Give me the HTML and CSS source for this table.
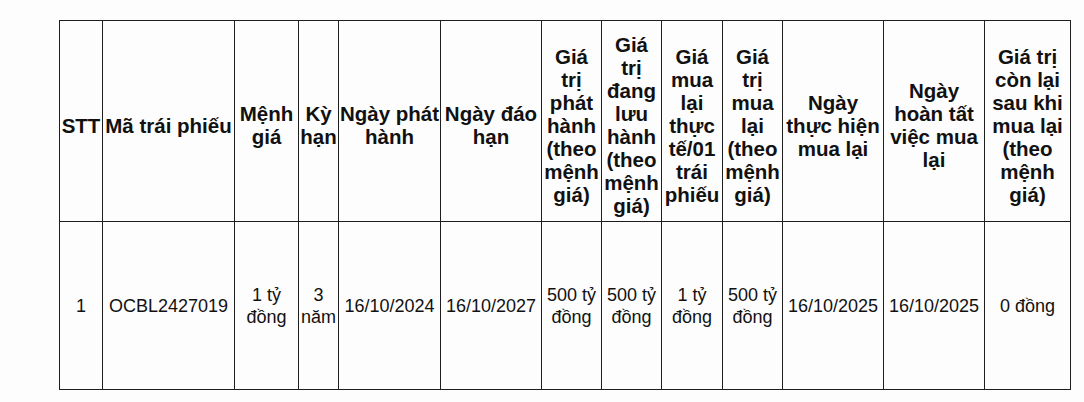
FILE: index.html
```html
<!DOCTYPE html>
<html lang="vi">
<head>
<meta charset="utf-8">
<title>Mua lại trái phiếu</title>
<link rel="stylesheet" href="styles.css">
</head>
<body>
<table class="bond-table">
  <colgroup>
    <col class="c-stt">
    <col class="c-code">
    <col class="c-par">
    <col class="c-term">
    <col class="c-date">
    <col class="c-date2">
    <col class="c-narrow">
    <col class="c-narrow">
    <col class="c-narrow2">
    <col class="c-narrow">
    <col class="c-date2">
    <col class="c-date2">
    <col class="c-last">
  </colgroup>
  <thead>
    <tr class="head-row">
      <th>STT</th>
      <th>Mã trái phiếu</th>
      <th>Mệnh<br>giá</th>
      <th>Kỳ<br>hạn</th>
      <th>Ngày phát<br>hành</th>
      <th>Ngày đáo<br>hạn</th>
      <th>Giá<br>trị<br>phát<br>hành<br>(theo<br>mệnh<br>giá)</th>
      <th>Giá<br>trị<br>đang<br>lưu<br>hành<br>(theo<br>mệnh<br>giá)</th>
      <th>Giá<br>mua<br>lại<br>thực<br>tế/01<br>trái<br>phiếu</th>
      <th>Giá<br>trị<br>mua<br>lại<br>(theo<br>mệnh<br>giá)</th>
      <th>Ngày<br>thực hiện<br>mua lại</th>
      <th>Ngày<br>hoàn tất<br>việc mua<br>lại</th>
      <th>Giá trị<br>còn lại<br>sau khi<br>mua lại<br>(theo<br>mệnh<br>giá)</th>
    </tr>
  </thead>
  <tbody>
    <tr class="body-row">
      <td>1</td>
      <td>OCBL2427019</td>
      <td>1 tỷ<br>đồng</td>
      <td>3<br>năm</td>
      <td>16/10/2024</td>
      <td>16/10/2027</td>
      <td>500 tỷ<br>đồng</td>
      <td>500 tỷ<br>đồng</td>
      <td>1 tỷ<br>đồng</td>
      <td>500 tỷ<br>đồng</td>
      <td>16/10/2025</td>
      <td>16/10/2025</td>
      <td>0 đồng</td>
    </tr>
  </tbody>
</table>
</body>
</html>
```
FILE: styles.css
```css
html, body {
  margin: 0;
  padding: 0;
  background: #fdfdfd;
}

body {
  padding: 20px 0 0 59px;
  font-family: "Liberation Sans", Arial, sans-serif;
  color: #111;
}

.bond-table {
  table-layout: fixed;
  width: 1011px;
  border-collapse: collapse;
  border: 1.5px solid #1e1e1e;
}

.c-stt { width: 43px; }
.c-code { width: 132px; }
.c-par { width: 64px; }
.c-term { width: 40px; }
.c-date { width: 102px; }
.c-date2 { width: 101px; }
.c-narrow { width: 60px; }
.c-narrow2 { width: 61px; }
.c-last { width: 86px; }

.bond-table th,
.bond-table td {
  border: 1px solid #1e1e1e;
  padding: 0 1px;
  text-align: center;
  vertical-align: middle;
  white-space: nowrap;
  overflow: visible;
}

.bond-table th {
  font-weight: bold;
  font-size: 20.5px;
  line-height: 23px;
  padding-top: 8px;
}

.bond-table td {
  font-weight: normal;
  font-size: 18px;
  line-height: 22px;
}

.head-row { height: 201px; }
.body-row { height: 168px; }
```
